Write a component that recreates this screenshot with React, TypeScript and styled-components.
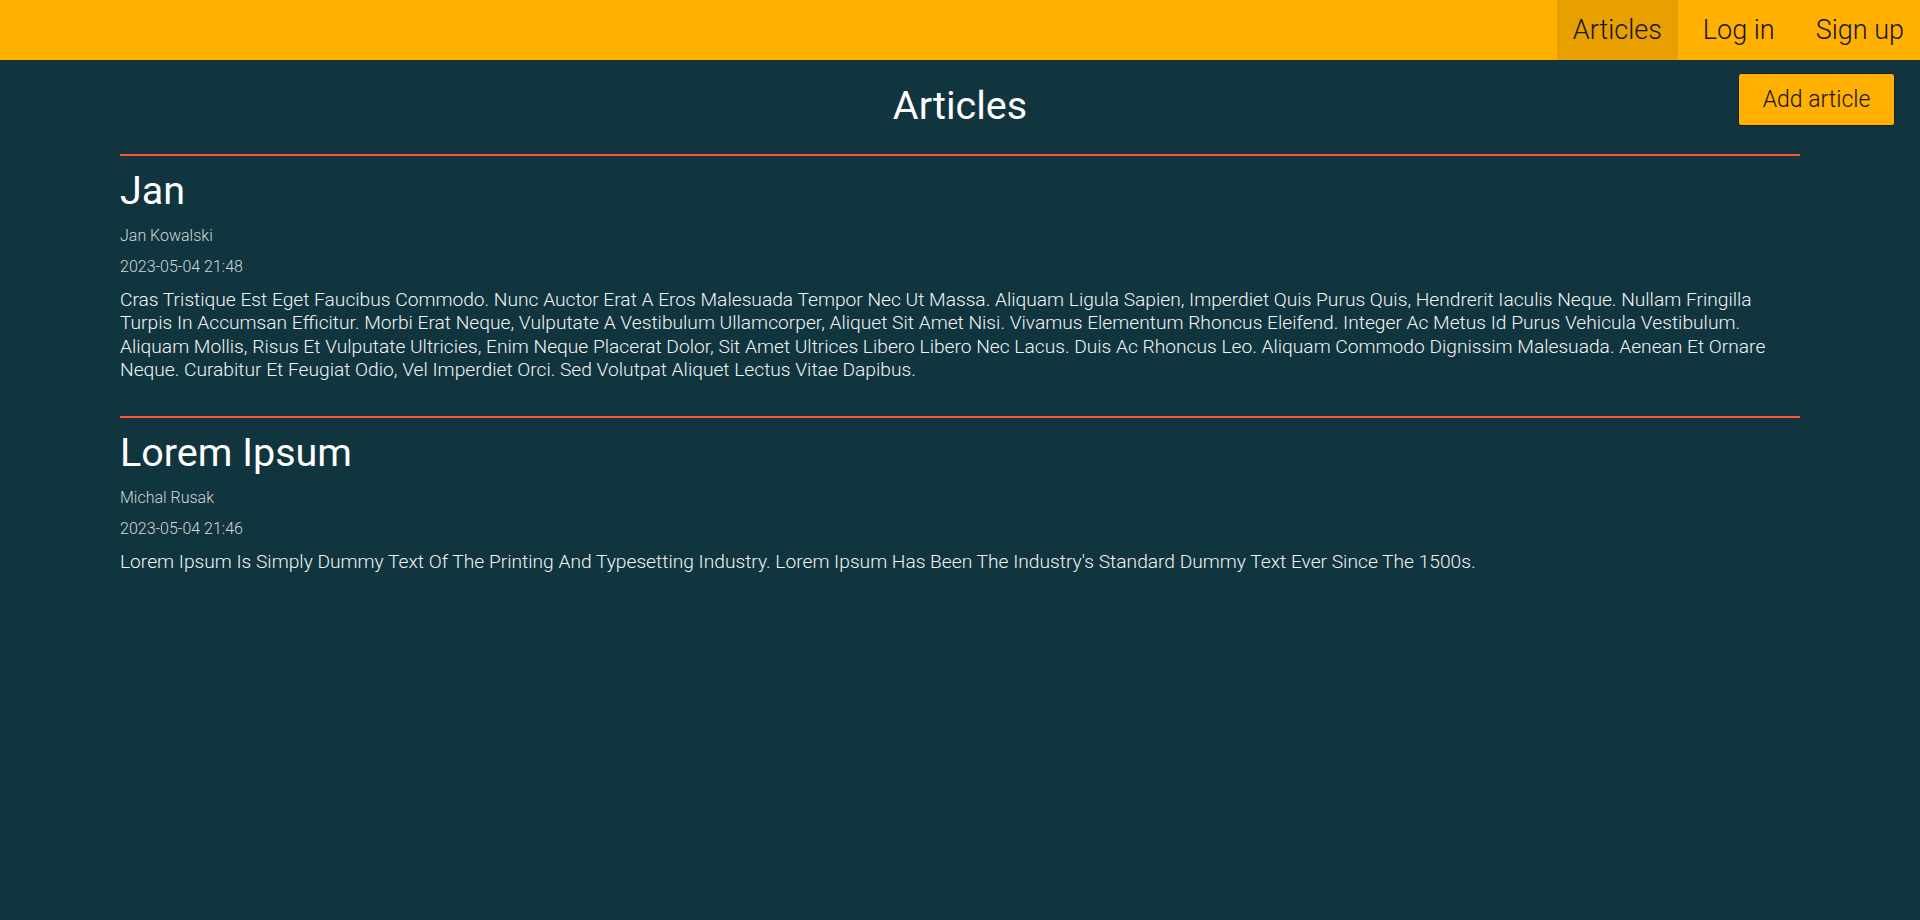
import React from "react";
import styled, { createGlobalStyle } from "styled-components";

const GlobalStyle = createGlobalStyle`
  html, body {
    margin: 0;
    padding: 0;
    background: #11353e;
    font-family: Roboto, "Noto Sans", "Liberation Sans", sans-serif;
  }
  body { min-height: 920px; }
  * { box-sizing: border-box; }
`;

const NavBar = styled.header`
  height: 60px;
  background: #ffb000;
  display: flex;
  justify-content: flex-end;
  align-items: stretch;
  gap: 9px;
`;

const NavItem = styled.a<{ $active?: boolean }>`
  display: flex;
  align-items: center;
  padding: 0 16px;
  font-size: 27px;
  font-weight: 300;
  color: #151515;
  text-decoration: none;
  background: ${(p) => (p.$active ? "#e8a000" : "transparent")};
  cursor: pointer;
`;

const Main = styled.main`
  position: relative;
  padding: 24px 120px 0;
`;

const AddButton = styled.button`
  position: absolute;
  top: 13px;
  right: 25px;
  width: 157px;
  height: 53px;
  background: #ffb000;
  border: 1px solid #1c1c1c;
  border-radius: 3px;
  font-family: Roboto, "Liberation Sans", sans-serif;
  font-size: 23px;
  font-weight: 300;
  color: #151515;
  cursor: pointer;
`;

const PageTitle = styled.h1`
  margin: 0 0 26px;
  font-size: 39.5px;
  line-height: 44px;
  font-weight: 400;
  color: #ffffff;
  text-align: center;
`;

const Article = styled.article`
  border-top: 2px solid #ff5533;
  padding-top: 13px;
  margin-bottom: 34px;
`;

const ArticleTitle = styled.h2`
  margin: 0 0 13px;
  font-size: 39.5px;
  line-height: 44px;
  font-weight: 400;
  color: #ffffff;
`;

const Meta = styled.div`
  font-size: 16px;
  line-height: 20px;
  font-weight: 300;
  color: #d3d6d7;
  margin-bottom: 11px;
`;

const Body = styled.p`
  margin: 0;
  font-size: 19.2px;
  line-height: 23.4px;
  font-weight: 300;
  color: #f4f4f4;
`;

const articles = [
  {
    title: "Jan",
    author: "Jan Kowalski",
    date: "2023-05-04 21:48",
    body:
      "Cras Tristique Est Eget Faucibus Commodo. Nunc Auctor Erat A Eros Malesuada Tempor Nec Ut Massa. Aliquam Ligula Sapien, Imperdiet Quis Purus Quis, Hendrerit Iaculis Neque. Nullam Fringilla Turpis In Accumsan Efficitur. Morbi Erat Neque, Vulputate A Vestibulum Ullamcorper, Aliquet Sit Amet Nisi. Vivamus Elementum Rhoncus Eleifend. Integer Ac Metus Id Purus Vehicula Vestibulum. Aliquam Mollis, Risus Et Vulputate Ultricies, Enim Neque Placerat Dolor, Sit Amet Ultrices Libero Libero Nec Lacus. Duis Ac Rhoncus Leo. Aliquam Commodo Dignissim Malesuada. Aenean Et Ornare Neque. Curabitur Et Feugiat Odio, Vel Imperdiet Orci. Sed Volutpat Aliquet Lectus Vitae Dapibus.",
  },
  {
    title: "Lorem Ipsum",
    author: "Michal Rusak",
    date: "2023-05-04 21:46",
    body:
      "Lorem Ipsum Is Simply Dummy Text Of The Printing And Typesetting Industry. Lorem Ipsum Has Been The Industry's Standard Dummy Text Ever Since The 1500s.",
  },
];

export default function App() {
  return (
    <>
      <GlobalStyle />
      <NavBar>
        <NavItem $active>Articles</NavItem>
        <NavItem>Log in</NavItem>
        <NavItem>Sign up</NavItem>
      </NavBar>
      <Main>
        <AddButton>Add article</AddButton>
        <PageTitle>Articles</PageTitle>
        {articles.map((a) => (
          <Article key={a.title}>
            <ArticleTitle>{a.title}</ArticleTitle>
            <Meta>{a.author}</Meta>
            <Meta>{a.date}</Meta>
            <Body>{a.body}</Body>
          </Article>
        ))}
      </Main>
    </>
  );
}
